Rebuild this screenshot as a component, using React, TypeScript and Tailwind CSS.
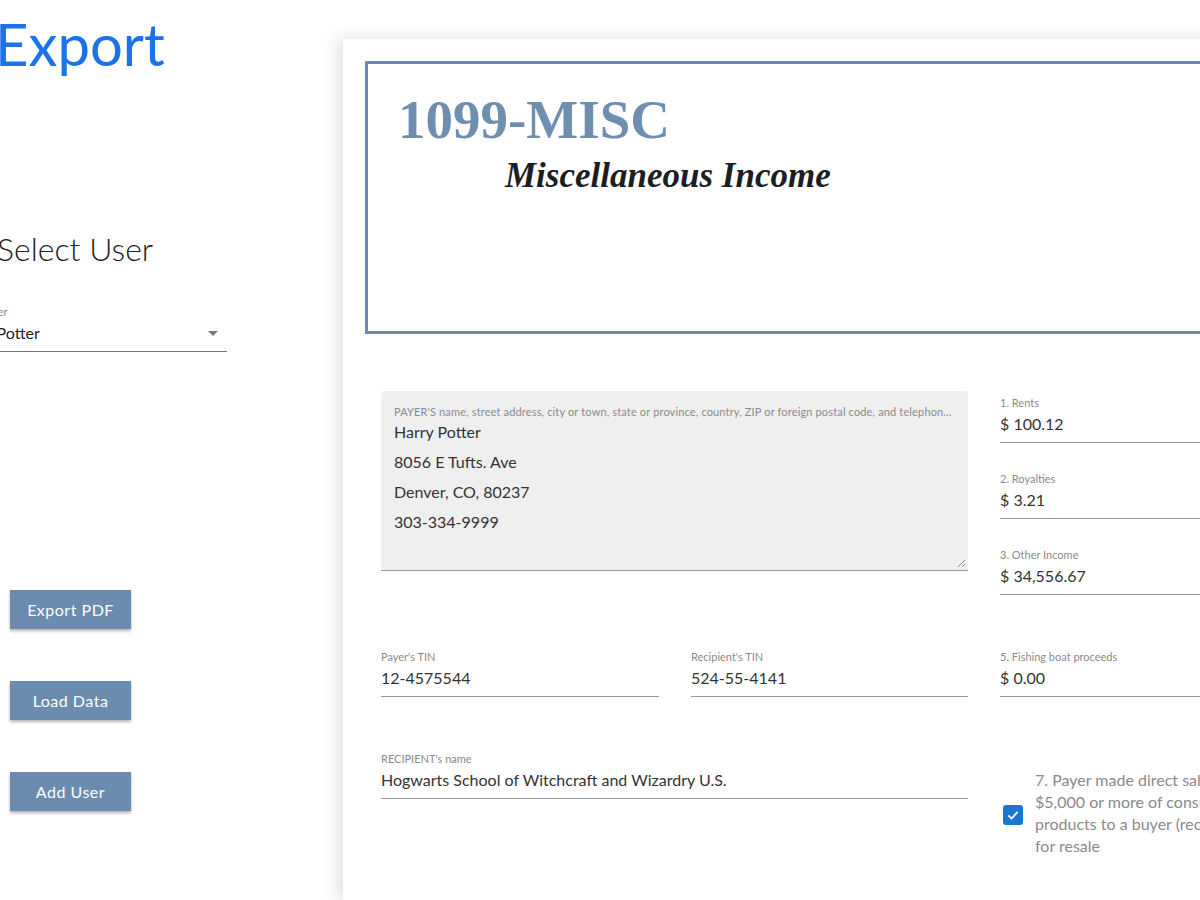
const sans = "font-['Lato','Liberation_Sans',sans-serif]";
const serif = "font-['Liberation_Serif','Times_New_Roman',serif]";

const Field = ({ label, value, className = "" }: { label: string; value: string; className?: string }) => (
  <div className={`flex shrink-0 flex-col border-b border-[#9a9a9a] pb-[8px] ${className}`}>
    <span className="text-[11px] leading-[14px] text-[#8a8a8a]">{label}</span>
    <span className="mt-[4px] text-[16px] leading-[20px] text-[#333]">{value}</span>
  </div>
);

const SideButton = ({ children }: { children: string }) => (
  <button className="w-[121px] h-[39px] bg-[#6b8cae] text-white text-[16px] tracking-[0.5px] shadow-[0_2px_3px_rgba(0,0,0,0.3)]">
    {children}
  </button>
);

export default function App() {
  return (
    <div className={`relative flex w-[1200px] h-[900px] overflow-hidden bg-white ${sans}`}>
      {/* left column, cropped at the window edge */}
      <div className="w-[343px] shrink-0 flex flex-col">
        <h1 className="ml-[-5px] mt-[9px] text-[58px] leading-[70px] text-[#1a73e8] font-normal">Export</h1>
        <h2 className="ml-[-3px] mt-[150px] text-[32px] leading-[40px] font-light text-[#222]">Select User</h2>
        <div className="ml-[-47px] mt-[36px] w-[274px] border-b border-[#777] pb-[8px]">
          <div className="text-[11px] leading-[14px] text-[#8a8a8a]">Select User</div>
          <div className="mt-[4px] flex items-center justify-between pr-[9px]">
            <span className="text-[16px] leading-[20px] text-[#222]">Harry Potter</span>
            <svg width="10" height="5" viewBox="0 0 10 5">
              <path d="M0 0 L10 0 L5 5 Z" fill="#777" />
            </svg>
          </div>
        </div>
        <div className="ml-[10px] mt-[238px] flex flex-col gap-[52px]">
          <SideButton>Export PDF</SideButton>
          <SideButton>Load Data</SideButton>
          <SideButton>Add User</SideButton>
        </div>
      </div>

      {/* form card */}
      <div className="mt-[39px] w-[960px] shrink-0 bg-white shadow-[-6px_0_16px_rgba(0,0,0,0.12)] pl-[22px] pt-[22px]">
        <div className="h-[273px] border-[3px] border-[#6b8cae] pl-[30px] pt-[26px]">
          <div className={`${serif} font-bold text-[55px] leading-[60px] text-[#6f8fb0]`}>1099-MISC</div>
          <div className={`${serif} ml-[107px] mt-[6px] font-bold italic text-[35px] leading-[40px] text-[#1b1f24]`}>
            Miscellaneous Income
          </div>
        </div>

        <div className="ml-[16px] mt-[57px] flex flex-col">
          <div className="flex items-start gap-[32px]">
            <div className="relative h-[180px] w-[587px] shrink-0 rounded-t-[4px] border-b border-[#9a9a9a] bg-[#efefef] px-[13px] pt-[14px]">
              <div className="truncate text-[11px] leading-[14px] tracking-[0.15px] text-[#8a8a8a]">
                PAYER'S name, street address, city or town, state or province, country, ZIP or foreign postal code, and telephone no.
              </div>
              <div className="mt-[3px] flex flex-col gap-[10px] text-[16px] leading-[20px] text-[#333]">
                <span>Harry Potter</span>
                <span>8056 E Tufts. Ave</span>
                <span>Denver, CO, 80237</span>
                <span>303-334-9999</span>
              </div>
              <svg className="absolute bottom-[2px] right-[2px]" width="9" height="9" viewBox="0 0 9 9">
                <path d="M8 1 L1 8 M8 5 L5 8" stroke="#888" strokeWidth="1" />
              </svg>
            </div>
            <div className="flex w-[277px] shrink-0 flex-col pt-[5px]">
              <Field label="1. Rents" value="$ 100.12" />
              <Field label="2. Royalties" value="$ 3.21" className="mt-[29px]" />
              <Field label="3. Other Income" value="$ 34,556.67" className="mt-[29px]" />
            </div>
          </div>

          <div className="mt-[55px] flex gap-[32px]">
            <Field label="Payer's TIN" value="12-4575544" className="w-[278px]" />
            <Field label="Recipient's TIN" value="524-55-4141" className="w-[277px]" />
            <Field label="5. Fishing boat proceeds" value="$ 0.00" className="w-[277px]" />
          </div>

          <div className="mt-[55px] flex items-start gap-[32px]">
            <Field label="RECIPIENT's name" value="Hogwarts School of Witchcraft and Wizardry U.S." className="w-[587px]" />
            <div className="mt-[17px] flex shrink-0 items-center gap-[12px] pl-[3px]">
              <span className="mt-[4px] flex h-[20px] w-[20px] shrink-0 items-center justify-center rounded-[3px] bg-[#1976d2]">
                <svg width="14" height="14" viewBox="0 0 24 24">
                  <path d="M4 12.5 L9.5 18 L20 6.5" stroke="white" strokeWidth="3" fill="none" />
                </svg>
              </span>
              <span className="whitespace-nowrap text-[16px] leading-[22px] text-[#8a8a8a]">
                7. Payer made direct sales of
                <br />
                $5,000 or more of consumer
                <br />
                products to a buyer (recipient)
                <br />
                for resale
              </span>
            </div>
          </div>
        </div>
      </div>
    </div>
  );
}
